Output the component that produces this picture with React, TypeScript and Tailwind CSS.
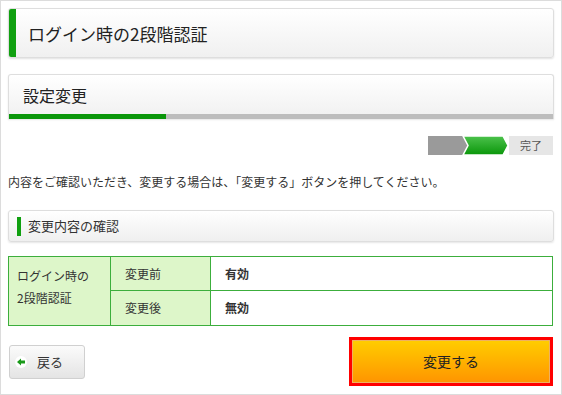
import React from 'react';

const font = { fontFamily: '"Noto Sans CJK JP", "Noto Sans", sans-serif' };

function StepBar() {
  return (
    <div className="flex items-center justify-end mt-[17px] pr-[1px] h-[19px]">
      <svg width="80" height="19" viewBox="0 0 80 19" className="block">
        <defs>
          <linearGradient id="gg" x1="0" y1="0" x2="0" y2="1">
            <stop offset="0" stopColor="#4cc24c" />
            <stop offset="1" stopColor="#0a960a" />
          </linearGradient>
        </defs>
        <polygon points="0,0 35,0 40,9.5 35,19 0,19" fill="#9a9a9a" />
        <polygon points="35,0 75,0 80,9.5 75,19 35,19 40,9.5" fill="url(#gg)" stroke="#fff" strokeWidth="1.5" />
      </svg>
      <div className="ml-[1px] w-[44px] h-[19px] bg-[#e6e6e6] text-[11px] text-[#555] flex items-center justify-center">完了</div>
    </div>
  );
}

export default function App() {
  return (
    <div style={font} className="w-[562px] h-[395px] border border-[#dcdcdc] bg-white text-[#333] px-[7px] pt-[7px] overflow-hidden">
      {/* ページタイトル */}
      <div className="h-[50px] flex items-center rounded-[3px] border border-[#dedede] shadow-[0_1px_2px_rgba(0,0,0,0.12)] bg-gradient-to-b from-white to-[#f0f0f0] overflow-hidden">
        <div className="w-[7px] self-stretch bg-[#10a010]" />
        <span className="ml-[12px] text-[17px] leading-none text-[#222]">ログイン時の2段階認証</span>
      </div>

      {/* 設定変更 */}
      <div className="mt-[16px] h-[45px] flex flex-col rounded-t-[3px] border border-b-0 border-[#dedede] bg-gradient-to-b from-white to-[#f0f0f0] shadow-[0_1px_2px_rgba(0,0,0,0.1)]">
        <div className="flex-1 flex items-center pl-[14px] text-[16px] text-[#222]">設定変更</div>
        <div className="flex h-[5px]">
          <div className="w-[157px] bg-[#0a960a]" />
          <div className="flex-1 bg-[#bdbdbd]" />
        </div>
      </div>

      <StepBar />

      <p className="mt-[21px] text-[12px] leading-none text-[#333]">
        内容をご確認いただき、変更する場合は、「変更する」ボタンを押してください。
      </p>

      {/* 変更内容の確認 */}
      <div className="mt-[22px] h-[32px] flex items-center rounded-[3px] border border-[#dedede] shadow-[0_1px_2px_rgba(0,0,0,0.1)] bg-gradient-to-b from-white to-[#efefef]">
        <div className="ml-[8px] w-[4px] h-[19px] bg-[#10a010]" />
        <span className="ml-[7px] text-[13px] text-[#333]">変更内容の確認</span>
      </div>

      <table className="mt-[14px] w-[545px] border-collapse text-[12px] text-[#333]">
        <tbody>
          <tr className="h-[34px]">
            <td rowSpan={2} className="w-[102px] align-top pt-[8px] pl-[8px] leading-[22px] border border-[#3cae3c] bg-[#ddf6c9]">
              ログイン時の<br />2段階認証
            </td>
            <td className="w-[100px] pl-[14px] border border-[#3cae3c] bg-[#ddf6c9]">変更前</td>
            <td className="pl-[14px] border border-[#3cae3c] font-bold">有効</td>
          </tr>
          <tr className="h-[35px]">
            <td className="pl-[14px] border border-[#3cae3c] bg-[#ddf6c9]">変更後</td>
            <td className="pl-[14px] border border-[#3cae3c] font-bold">無効</td>
          </tr>
        </tbody>
      </table>

      <div className="mt-[11px] flex items-center justify-between">
        <button className="ml-[1px] w-[76px] h-[34px] flex items-center rounded-[3px] border border-[#d0d0d0] bg-gradient-to-b from-[#fbfbfb] to-[#e4e4e4] text-[13px] text-[#333]">
          <span className="ml-[5px] w-[12px] h-[12px] rounded-full bg-white flex items-center justify-center">
            <svg width="8" height="8" viewBox="0 0 8 8">
              <polygon points="0,4 4,0.5 4,2.5 8,2.5 8,5.5 4,5.5 4,7.5" fill="#1a9a1a" />
            </svg>
          </span>
          <span className="ml-[10px]">戻る</span>
        </button>
        <button className="mr-[1px] w-[204px] h-[49px] border-[3px] border-[#ff0000] p-0">
          <div className="w-full h-full border border-[#f0b060] bg-gradient-to-b from-[#ffcc00] to-[#ff9500] flex items-center justify-center text-[14px] text-[#222]">
            変更する
          </div>
        </button>
      </div>
    </div>
  );
}
